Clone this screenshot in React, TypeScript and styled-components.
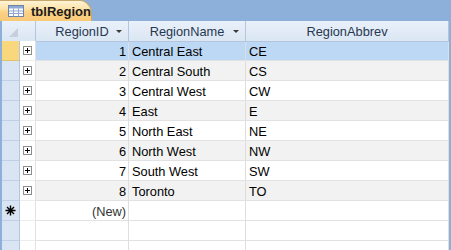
import { Fragment } from 'react';
import styled, { createGlobalStyle } from 'styled-components';

const GlobalStyle = createGlobalStyle`
  html, body {
    margin: 0;
    padding: 0;
    background: #8db0db;
  }
  * {
    box-sizing: border-box;
  }
`;

const Frame = styled.div`
  width: 451px;
  height: 250px;
  background: #8db0db;
  display: flex;
  flex-direction: column;
  overflow: hidden;
  font-family: "Liberation Sans", Arial, sans-serif;
  font-size: 12.8px;
`;

const TabStrip = styled.div`
  height: 22px;
  display: flex;
  align-items: flex-end;
`;

const Tab = styled.div`
  width: 92px;
  height: 21px;
  display: flex;
  align-items: center;
  gap: 7px;
  padding-left: 8px;
  border: 1px solid #c9a66a;
  border-left: none;
  border-bottom: none;
  border-top-right-radius: 12px 14px;
  background: linear-gradient(#fff4d6 0%, #fde2a6 40%, #fbd187 55%, #f9c977 100%);
  font-weight: bold;
  font-size: 13px;
  color: #1b1b1b;
`;

const Sheet = styled.div`
  flex: 1;
  margin: 0 2px;
  background: #fff;
  display: grid;
  grid-template-columns: 18px 16px 93px 117px 1fr;
  grid-auto-rows: 20px;
  align-content: start;
`;

const Corner = styled.div`
  grid-column: span 2;
  height: 21px;
  background: linear-gradient(#e9f0f9, #dbe6f4);
  border-right: 1px solid #b3c6de;
  border-bottom: 1px solid #b3c6de;
  display: flex;
  align-items: flex-end;
  padding: 0 0 4px 7px;
`;

const HeadCell = styled.div`
  height: 21px;
  background: linear-gradient(#e9f0f9, #dbe6f4);
  border-right: 1px solid #b3c6de;
  border-bottom: 1px solid #b3c6de;
  color: #263850;
  display: flex;
  align-items: center;
  justify-content: center;
  position: relative;
`;

const Arrow = styled.span`
  position: absolute;
  right: 6px;
  top: 9px;
  width: 0;
  height: 0;
  border-left: 3px solid transparent;
  border-right: 3px solid transparent;
  border-top: 3px solid #3a3a3a;
`;

const Selector = styled.div<{ $current?: boolean }>`
  background: ${p => (p.$current ? '#f9d77d' : '#dae5f3')};
  border-right: 1px solid #b3c6de;
  border-bottom: 1px solid ${p => (p.$current ? '#e4c26a' : '#c0d0e4')};
  display: flex;
  align-items: center;
  justify-content: center;
`;

const Expand = styled.div`
  background: #fff;
  border-right: 1px solid #e2e2e2;
  border-bottom: 1px solid #ececec;
  display: flex;
  align-items: center;
  justify-content: center;
`;

const PlusBox = styled.span`
  width: 9px;
  height: 9px;
  border: 1px solid #8c8c8c;
  background: #fff;
  position: relative;
  &::before {
    content: '';
    position: absolute;
    left: 1px;
    top: 3px;
    width: 5px;
    height: 1px;
    background: #000;
  }
  &::after {
    content: '';
    position: absolute;
    left: 3px;
    top: 1px;
    width: 1px;
    height: 5px;
    background: #000;
  }
`;

const Cell = styled.div<{ $bg: string; $right?: boolean; $muted?: boolean }>`
  background: ${p => p.$bg};
  border-right: 1px solid #dedede;
  border-bottom: 1px solid #e2e2e2;
  display: flex;
  align-items: center;
  justify-content: ${p => (p.$right ? 'flex-end' : 'flex-start')};
  padding: 1px ${p => (p.$right ? '2px' : '0')} 0 ${p => (p.$right ? '0' : '3px')};
  color: ${p => (p.$muted ? '#333' : '#000')};
  white-space: nowrap;
`;

const regions = [
  { id: 1, name: 'Central East', abbrev: 'CE' },
  { id: 2, name: 'Central South', abbrev: 'CS' },
  { id: 3, name: 'Central West', abbrev: 'CW' },
  { id: 4, name: 'East', abbrev: 'E' },
  { id: 5, name: 'North East', abbrev: 'NE' },
  { id: 6, name: 'North West', abbrev: 'NW' },
  { id: 7, name: 'South West', abbrev: 'SW' },
  { id: 8, name: 'Toronto', abbrev: 'TO' },
];

function TableIcon() {
  return (
    <svg width="16" height="12" viewBox="0 0 16 12">
      <rect x="0.5" y="0.5" width="15" height="11" fill="#fff" stroke="#6a85ad" />
      <rect x="1" y="1" width="14" height="2.5" fill="#8fa9d2" />
      <path d="M1 6h14M1 8.5h14M5.5 3.5v8M10.5 3.5v8" stroke="#8fa9d2" strokeWidth="1" />
    </svg>
  );
}

function NewMark() {
  return (
    <svg width="11" height="11" viewBox="0 0 11 11">
      <path d="M5.5 0.5v10M0.5 5.5h10M2 2l7 7M9 2l-7 7" stroke="#000" strokeWidth="1.4" />
    </svg>
  );
}

function App() {
  const rowBg = (i: number) => (i === 0 ? '#bcd8f5' : i % 2 === 1 ? '#f2f2f2' : '#fff');
  return (
    <Frame>
      <GlobalStyle />
      <TabStrip>
        <Tab>
          <TableIcon />
          tblRegion
        </Tab>
      </TabStrip>
      <Sheet>
        <Corner>
          <svg width="9" height="9" viewBox="0 0 9 9">
            <path d="M9 0V9H0Z" fill="#c6cfdb" />
          </svg>
        </Corner>
        <HeadCell>
          RegionID
          <Arrow />
        </HeadCell>
        <HeadCell>
          RegionName
          <Arrow />
        </HeadCell>
        <HeadCell>RegionAbbrev</HeadCell>

        {regions.map((r, i) => (
          <Fragment key={r.id}>
            <Selector $current={i === 0} />
            <Expand>
              <PlusBox />
            </Expand>
            <Cell $bg={rowBg(i)} $right>
              {r.id}
            </Cell>
            <Cell $bg={rowBg(i)}>{r.name}</Cell>
            <Cell $bg={rowBg(i)}>{r.abbrev}</Cell>
          </Fragment>
        ))}

        <Selector>
          <NewMark />
        </Selector>
        <Expand />
        <Cell $bg="#fff" $right $muted>
          (New)
        </Cell>
        <Cell $bg="#fff" />
        <Cell $bg="#fff" />

        {[0, 1].map(k => (
          <Fragment key={k}>
            <Selector />
            <Expand />
            <Cell $bg="#fff" />
            <Cell $bg="#fff" />
            <Cell $bg="#fff" />
          </Fragment>
        ))}
      </Sheet>
    </Frame>
  );
}

export default App;
